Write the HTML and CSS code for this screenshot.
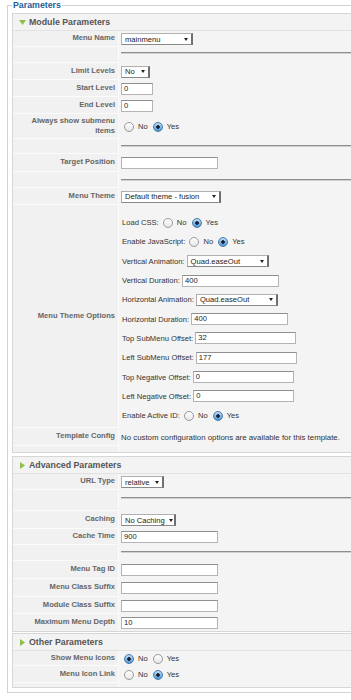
FILE: index.html
```html
<!DOCTYPE html>
<html>
<head>
<meta charset="utf-8">
<title>Parameters</title>
<link rel="stylesheet" href="styles.css">
</head>
<body>
<fieldset class="params">
  <legend>Parameters</legend>

  <div class="panel">
    <div class="ph"><svg class="tri" width="7" height="5" viewBox="0 0 7 5"><path d="M0 0H7L3.5 5Z"/></svg>Module Parameters</div>
    <div class="row h16"><div class="key">Menu Name</div><div class="val"><span class="sel w72">mainmenu<span class="arr"></span></span></div></div>
    <div class="row h16"><div class="key"></div><div class="val sp p5"><div class="hr"></div></div></div>
    <div class="row h17"><div class="key">Limit Levels</div><div class="val"><span class="sel w29">No<span class="arr"></span></span></div></div>
    <div class="row h17"><div class="key">Start Level</div><div class="val"><span class="inp w32">0</span></div></div>
    <div class="row h17"><div class="key">End Level</div><div class="val"><span class="inp w32">0</span></div></div>
    <div class="row h25"><div class="key wrap">Always show submenu items</div><div class="val"><span class="radios"><span class="radio"></span><span class="rl">No</span><span class="radio on"></span><span class="rl">Yes</span></span></div></div>
    <div class="row h15"><div class="key"></div><div class="val sp p6"><div class="hr"></div></div></div>
    <div class="row h18"><div class="key">Target Position</div><div class="val"><span class="inp w97"></span></div></div>
    <div class="row h16"><div class="key"></div><div class="val sp p7"><div class="hr"></div></div></div>
    <div class="row h17"><div class="key">Menu Theme</div><div class="val"><span class="sel w100">Default theme - fusion<span class="arr"></span></span></div></div>
    <div class="row h223"><div class="key">Menu Theme Options</div>
      <div class="val opts">
        <div class="opt">Load CSS: <span class="radios"><span class="radio"></span><span class="rl">No</span><span class="radio on"></span><span class="rl">Yes</span></span></div>
        <div class="opt">Enable JavaScript: <span class="radios"><span class="radio"></span><span class="rl">No</span><span class="radio on"></span><span class="rl">Yes</span></span></div>
        <div class="opt">Vertical Animation: <span class="sel w82">Quad.easeOut<span class="arr"></span></span></div>
        <div class="opt">Vertical Duration: <span class="inp w97">400</span></div>
        <div class="opt">Horizontal Animation: <span class="sel w82">Quad.easeOut<span class="arr"></span></span></div>
        <div class="opt">Horizontal Duration: <span class="inp w97">400</span></div>
        <div class="opt">Top SubMenu Offset: <span class="inp w101">32</span></div>
        <div class="opt">Left SubMenu Offset: <span class="inp w101">177</span></div>
        <div class="opt">Top Negative Offset: <span class="inp w101">0</span></div>
        <div class="opt">Left Negative Offset: <span class="inp w101">0</span></div>
        <div class="opt">Enable Active ID: <span class="radios"><span class="radio"></span><span class="rl">No</span><span class="radio on"></span><span class="rl">Yes</span></span></div>
      </div>
    </div>
    <div class="row h18"><div class="key">Template Config</div><div class="val note">No custom configuration options are available for this template.</div></div>
    <div class="row h6 last"><div class="key"></div><div class="val"></div></div>
  </div>

  <div class="panel adv">
    <div class="ph"><svg class="tri" width="5" height="7" viewBox="0 0 5 7"><path d="M0 0L5 3.5L0 7Z"/></svg>Advanced Parameters</div>
    <div class="row h16"><div class="key">URL Type</div><div class="val"><span class="sel w43">relative<span class="arr"></span></span></div></div>
    <div class="row h21"><div class="key"></div><div class="val sp p7"><div class="hr"></div></div></div>
    <div class="row h18"><div class="key">Caching</div><div class="val"><span class="sel w55">No Caching<span class="arr"></span></span></div></div>
    <div class="row h16"><div class="key">Cache Time</div><div class="val"><span class="inp w97">900</span></div></div>
    <div class="row h16"><div class="key"></div><div class="val sp p6"><div class="hr"></div></div></div>
    <div class="row h18"><div class="key">Menu Tag ID</div><div class="val"><span class="inp w97"></span></div></div>
    <div class="row h18"><div class="key">Menu Class Suffix</div><div class="val"><span class="inp w97"></span></div></div>
    <div class="row h17"><div class="key">Module Class Suffix</div><div class="val"><span class="inp w97"></span></div></div>
    <div class="row h17 last"><div class="key">Maximum Menu Depth</div><div class="val"><span class="inp w97">10</span></div></div>
  </div>

  <div class="panel oth">
    <div class="ph"><svg class="tri" width="5" height="7" viewBox="0 0 5 7"><path d="M0 0L5 3.5L0 7Z"/></svg>Other Parameters</div>
    <div class="row h15"><div class="key">Show Menu Icons</div><div class="val"><span class="radios"><span class="radio on"></span><span class="rl">No</span><span class="radio"></span><span class="rl">Yes</span></span></div></div>
    <div class="row h17"><div class="key">Menu Icon Link</div><div class="val"><span class="radios"><span class="radio"></span><span class="rl">No</span><span class="radio on"></span><span class="rl">Yes</span></span></div></div>
    <div class="row h4 last"><div class="key"></div><div class="val"></div></div>
  </div>
</fieldset>
</body>
</html>
```

FILE: styles.css
```css
html, body {
  margin: 0;
  padding: 0;
  overflow: hidden;
  background: #fff;
}
body {
  font-family: "Liberation Sans", Arial, Helvetica, sans-serif;
  color: #333;
  width: 351px;
  height: 700px;
}
.params {
  margin: 0 0 0 7px;
  padding: 3px 0 4px 4px;
  border: 1px solid #d2d2d2;
  border-right: 0;
  box-sizing: border-box;
  width: 344px;
  min-width: 0;
}
.params legend {
  font-size: 8.8px;
  line-height: 10px;
  font-weight: bold;
  color: #1e5e98;
  padding: 0 1px;
}
.panel {
  border: 1px solid #d6d6d6;
  border-right: 0;
  background: #f4f4f4;
}
.panel.adv { margin-top: 3px; }
.panel.oth { margin-top: 1px; }
.ph {
  height: 17px;
  box-sizing: border-box;
  display: flex;
  align-items: center;
  padding-left: 6px;
  font-size: 8.8px;
  font-weight: bold;
  color: #555;
  border-bottom: 1px solid #e2e2e2;
  background: #f3f3f3;
}
.tri {
  fill: #8cc04a;
  margin-right: 3px;
  flex: none;
}
.ph .tri[width="5"] { margin-left: 1px; margin-right: 4px; }

.row {
  display: flex;
}
.h4 { height: 4px; }
.h6 { height: 6px; }
.h15 { height: 15px; }
.h16 { height: 16px; }
.h17 { height: 17px; }
.h18 { height: 18px; }
.h21 { height: 21px; }
.h25 { height: 25px; }
.h223 { height: 223px; }

.key {
  width: 106px;
  flex: none;
  box-sizing: border-box;
  display: flex;
  align-items: center;
  justify-content: flex-end;
  text-align: right;
  padding: 0 3px 0 8px;
  background: #f1f1f1;
  border-bottom: 1px solid #fbfbfb;
  border-right: 1px solid #fbfbfb;
  font-size: 7.6px;
  line-height: 10.5px;
  font-weight: bold;
  color: #666;
}
.row.last .key { border-bottom: 0; }
.val {
  flex: 1;
  min-width: 0;
  display: flex;
  align-items: center;
  padding-left: 2px;
  font-size: 7.6px;
  color: #333;
  white-space: nowrap;
}
.val.note { font-size: 7.85px; }
.val.sp {
  align-items: flex-start;
}
.p5 { padding-top: 5px; }
.p6 { padding-top: 6px; }
.p7 { padding-top: 7px; }
.hr {
  width: 100%;
  height: 0;
  border-top: 1px solid #8e8e8e;
  border-bottom: 1px solid #d0d0d0;
}

.inp {
  display: inline-block;
  height: 12px;
  box-sizing: border-box;
  border: 1px solid #b4b4b4;
  border-top-color: #8f8f8f;
  background: #fff;
  padding-left: 2px;
  line-height: 10px;
  font-size: 7.6px;
  color: #222;
}
.sel {
  display: inline-flex;
  align-items: center;
  justify-content: space-between;
  height: 12px;
  box-sizing: border-box;
  border: 1px solid #b0b0b0;
  border-right: 2px solid #6f6f6f;
  border-bottom-color: #8a8a8a;
  background: #fff;
  padding: 0 3px 0 3px;
  font-size: 7.6px;
  color: #222;
}
.arr {
  width: 0;
  height: 0;
  border-left: 2.5px solid transparent;
  border-right: 2.5px solid transparent;
  border-top: 3px solid #222;
  margin-left: 4px;
}
.w29 { width: 29px; }
.w32 { width: 32px; }
.w43 { width: 43px; }
.w55 { width: 55px; }
.w72 { width: 72px; }
.w82 { width: 82px; }
.w97 { width: 97px; }
.w100 { width: 100px; }
.w101 { width: 101px; }

.radios {
  display: inline-flex;
  align-items: center;
  margin-left: 3px;
}
.radio {
  width: 8px;
  height: 8px;
  border-radius: 50%;
  border: 1px solid #9a9a9a;
  background: linear-gradient(#ffffff, #e6e6e6);
  flex: none;
}
.radio.on {
  border-color: #4b78a6;
  background: radial-gradient(circle at 50% 50%, #1b2030 0, #1b2030 1.5px, transparent 2.1px),
              linear-gradient(#b8dcf7, #4a97da);
}
.rl {
  margin: 0 5px 0 4px;
}

.opts {
  flex-direction: column;
  align-items: stretch;
  padding-top: 8px;
}
.opt {
  height: 19.3px;
  display: flex;
  align-items: center;
  white-space: pre;
  padding-left: 1px;
}
.opt .radios { margin-left: 2px; }
```
